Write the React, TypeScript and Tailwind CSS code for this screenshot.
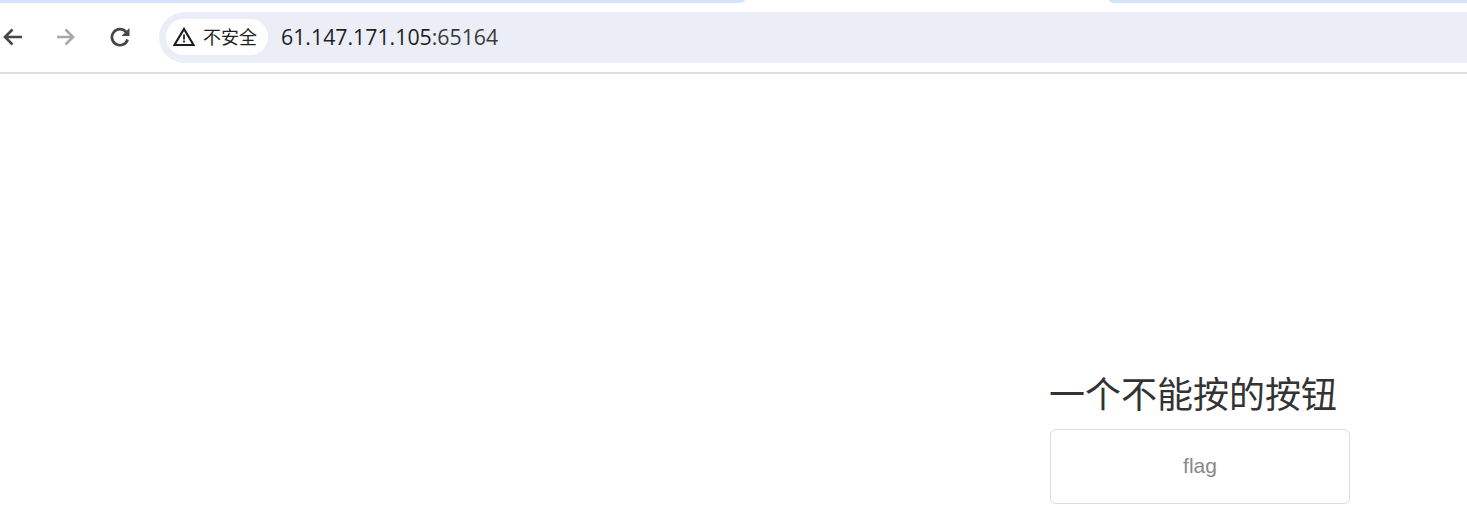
const cjk = '"Liberation Sans", "Noto Sans CJK SC", sans-serif'

function BackIcon() {
  return (
    <svg width="20" height="20" viewBox="0 0 20 20" fill="none" stroke="#474747" strokeWidth="2.6">
      <path d="M20 10H3.5M10.5 2.5 3 10l7.5 7.5" />
    </svg>
  )
}

function ForwardIcon() {
  return (
    <svg width="20" height="20" viewBox="0 0 20 20" fill="none" stroke="#a8a8a8" strokeWidth="2.6">
      <path d="M1 10h16M9.5 2.5 17 10l-7.5 7.5" />
    </svg>
  )
}

function ReloadIcon() {
  return (
    <svg width="22" height="22" viewBox="0 0 22 22" fill="none">
      <path d="M18.6 13.5a8 8 0 1 1-1.6-7.5" stroke="#474747" strokeWidth="2.7" />
      <path d="M20.5 2v8h-8z" fill="#474747" />
    </svg>
  )
}

function WarningIcon() {
  return (
    <svg width="22" height="20" viewBox="0 0 22 20" fill="none">
      <path d="M11 2 20.6 18H1.4z" stroke="#1f1f1f" strokeWidth="2.2" strokeLinejoin="miter" />
      <path d="M10.1 7.5h1.8v5h-1.8zM10.1 13.6h1.8v1.8h-1.8z" fill="#1f1f1f" />
    </svg>
  )
}

export default function App() {
  return (
    <div className="flex h-[530px] w-[1467px] flex-col overflow-hidden bg-white">
      <div className="flex h-[3px] shrink-0 justify-between bg-white">
        <div className="w-[745px] rounded-br-[6px_3px] bg-[#d3e3fd]" />
        <div className="w-[358px] rounded-bl-[6px_3px] bg-[#d3e3fd]" />
      </div>

      <div className="flex h-[69px] shrink-0 items-center pb-[1px] pl-[2px]">
        <BackIcon />
        <div className="ml-[34px]">
          <ForwardIcon />
        </div>
        <div className="ml-[33px]">
          <ReloadIcon />
        </div>
        <div className="ml-[28px] flex h-[51px] flex-1 items-center rounded-l-full bg-[#ebeef7] pl-[7px]">
          <div className="flex h-[36px] w-[102px] items-center gap-[8px] rounded-full bg-white pl-[7px]">
            <WarningIcon />
            <span className="pt-[2px] text-[18px] text-[#1f1f1f]" style={{ fontFamily: cjk }}>
              不安全
            </span>
          </div>
          <span className="ml-[13px] text-[21.3px] text-[#1f1f1f]" style={{ fontFamily: '"Open Sans", sans-serif' }}>
            61.147.171.105<span className="text-[#3a3a3a]">:65164</span>
          </span>
        </div>
      </div>
      <div className="h-[2px] shrink-0 bg-[#e0e0e0]" />

      <div className="flex flex-1 flex-col items-end pr-[117px] pt-[295px]">
        <div className="flex w-[301px] flex-col">
          <h1 className="text-[36px] leading-[54px] font-normal text-[#333333]" style={{ fontFamily: cjk }}>
            一个不能按的按钮
          </h1>
          <button
            className="ml-[1px] mt-[6px] h-[75px] w-[300px] rounded-[6px] border border-[#dddddd] bg-white pb-[2px] text-[21px] text-[#888888]"
            style={{ fontFamily: '"Liberation Sans", sans-serif' }}
          >
            flag
          </button>
        </div>
      </div>
    </div>
  )
}
